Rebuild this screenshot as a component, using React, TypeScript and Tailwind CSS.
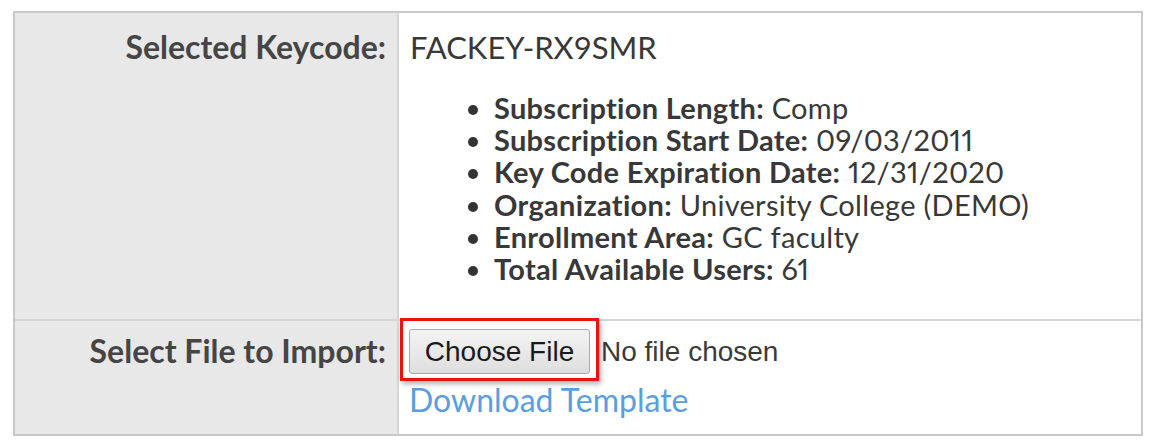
import React from "react";

const lato = { fontFamily: "Lato, 'Open Sans', sans-serif" };

export default function App() {
  const items: [string, string][] = [
    ["Subscription Length:", "Comp"],
    ["Subscription Start Date:", "09/03/2011"],
    ["Key Code Expiration Date:", "12/31/2020"],
    ["Organization:", "University College (DEMO)"],
    ["Enrollment Area:", "GC faculty"],
    ["Total Available Users:", "61"],
  ];
  return (
    <div className="w-[1152px] h-[442px] bg-white pt-[11px] pl-[13px] font-['Lato',sans-serif]">
      <div className="w-[1130px] border-2 border-[#c8c8c8] grid grid-cols-[384px_1fr]">
        {/* Row 1 */}
        <div className="bg-[#e8e8e8] border-r-2 border-[#d6d6d6] text-right pr-[11px] pt-[15px] h-[306px]">
          <span className="text-[32px] leading-[38px] font-bold text-[#454545]">Selected Keycode:</span>
        </div>
        <div className="pl-[11px] pt-[15px] h-[306px]">
          <div className="text-[31px] leading-[38px] text-[#383838]">FACKEY-RX9SMR</div>
          <ul className="mt-[26px] list-disc pl-[84px] text-[29px] leading-[32.2px] tracking-[0.3px] text-[#383838] marker:text-[#333] proportional-nums">
            {items.map(([k, v]) => (
              <li key={k}>
                <span className="font-bold">{k}</span> {v}
              </li>
            ))}
          </ul>
        </div>
        {/* Row 2 */}
        <div className="bg-[#e8e8e8] border-r-2 border-t-2 border-[#d6d6d6] text-right pr-[11px] pt-[11px] h-[115px]">
          <span className="text-[32px] leading-[38px] font-bold text-[#454545]">Select File to Import:</span>
        </div>
        <div className="border-t-2 border-[#d6d6d6] pl-[10px] pt-[8px] h-[115px]">
          <div className="flex items-center">
            <div className="relative">
              <div className="absolute -left-[9px] -top-[11px] -right-[9px] -bottom-[7px] border-[3px] border-[#ee1111] shadow-[2px_3px_5px_rgba(0,0,0,0.3)]"></div>
              <button className="relative h-[45px] w-[181px] rounded-[3px] border border-[#a8a8a8] bg-gradient-to-b from-[#f4f4f4] to-[#dedede] text-[28px] text-[#1a1a1a] font-['Liberation_Sans',Arial,sans-serif]">
                Choose File
              </button>
            </div>
            <span className="ml-[11px] text-[28px] text-[#3a3a3a] font-['Liberation_Sans',Arial,sans-serif]">No file chosen</span>
          </div>
          <div className="mt-[7px] text-[32px] leading-[38px] text-[#5b9ee0]" style={lato}>Download Template</div>
        </div>
      </div>
    </div>
  );
}
